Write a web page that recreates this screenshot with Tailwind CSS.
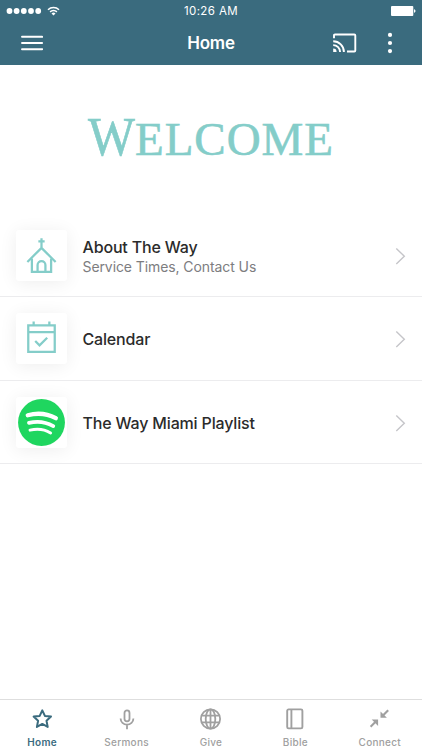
<!DOCTYPE html>
<html lang="en">
<head>
    <meta charset="UTF-8">
    <meta name="viewport" content="width=device-width, initial-scale=1.0">
    <title>Home</title>
    <script src="https://cdn.jsdelivr.net/npm/@tailwindcss/browser@4"></script>
</head>
<body class="bg-white font-['Inter',sans-serif] overflow-hidden">
    <div class="w-[422px] h-[750px] flex flex-col">
        <!-- Header -->
        <header class="h-[65px] shrink-0 bg-[#3a6b7e] text-white">
            <div class="h-[21px] grid grid-cols-3 items-center pl-[6px] pr-[6px]">
                <div class="flex items-center gap-[5px]">
                    <svg class="w-[36px] h-[8px]" viewBox="0 0 36 8" fill="currentColor">
                        <circle cx="3.5" cy="4" r="2.9"/>
                        <circle cx="10.6" cy="4" r="2.9"/>
                        <circle cx="17.8" cy="4" r="2.9"/>
                        <circle cx="25" cy="4" r="2.9"/>
                        <circle cx="32.2" cy="4" r="2.9"/>
                    </svg>
                    <svg class="w-[13px] h-[10px]" viewBox="0 0 12 10" fill="none" stroke="currentColor" stroke-width="1.5">
                        <path d="M.5 3.7a7.8 7.8 0 0 1 11 0M2.6 5.9a4.8 4.8 0 0 1 6.8 0"/>
                        <path d="M6 9.6 4 7.5a2.8 2.8 0 0 1 4 0z" fill="currentColor" stroke="none"/>
                    </svg>
                </div>
                <div class="text-center text-[11.5px] leading-none tracking-[0.4px] pt-[2px]">10:26 AM</div>
                <svg class="justify-self-end w-[25px] h-[10px]" viewBox="0 0 25 10" fill="currentColor">
                    <rect x="0" y="0" width="22.3" height="10" rx="1"/>
                    <path d="M23 3.3c2 .4 2 3 0 3.4z"/>
                </svg>
            </div>
            <div class="h-[44px] grid grid-cols-3 items-center">
                <svg class="ml-[21px] w-[22px] h-[16px]" viewBox="0 0 22 16" fill="none" stroke="currentColor" stroke-width="1.9" stroke-linecap="round">
                    <path d="M1 1.8h20.2M1 8h20.2M1 14.2h20.2"/>
                </svg>
                <h1 class="text-center text-[17px] leading-none font-semibold tracking-[-0.2px]">Home</h1>
                <div class="flex items-center justify-end gap-[30px] pr-[29px]">
                    <svg class="w-[25px] h-[20px]" viewBox="0 0 25 20" fill="none" stroke="currentColor" stroke-width="1.9">
                        <path d="M2 5.2V2.5q0-1 1-1h19.3q1 0 1 1v15q0 1-1 1H15"/>
                        <path d="M1.2 8.3A10.7 10.7 0 0 1 11.9 19M1.2 12.1A6.9 6.9 0 0 1 8.1 19"/>
                        <path d="M1.2 15.6A3.4 3.4 0 0 1 4.6 19H1.2z" fill="currentColor" stroke="none"/>
                    </svg>
                    <svg class="w-[6px] h-[22px]" viewBox="0 0 6 22" fill="currentColor">
                        <circle cx="3" cy="2.9" r="2.1"/>
                        <circle cx="3" cy="11" r="2.1"/>
                        <circle cx="3" cy="19.1" r="2.1"/>
                    </svg>
                </div>
            </div>
        </header>

        <main class="flex-1 overflow-hidden">
            <!-- Banner -->
            <div class="h-[148px]">
                <svg class="w-[422px] h-[148px] font-['Liberation_Serif',serif]" viewBox="0 0 422 148" fill="#84cdc9" stroke="#84cdc9" stroke-width="0.6">
                    <text x="88" y="90" font-size="54" textLength="47" lengthAdjust="spacingAndGlyphs">W</text>
                    <text x="135" y="90" font-size="47" textLength="198" lengthAdjust="spacing">ELCOME</text>
                </svg>
            </div>

            <!-- List -->
            <ul>
                <li class="h-[84px] flex items-center border-b border-[#ececee] pl-[15.5px] pr-[16px]">
                    <div class="size-[51px] mt-[2px] rounded-[3px] bg-white shadow-[0_2px_18px_rgba(0,0,0,0.07)]">
                        <svg class="size-[51px]" viewBox="0 0 52 52" fill="none" stroke="#84cdc9" stroke-width="2.3">
                            <path d="M26 8.5v9M22.8 11.5h6.4"/>
                            <path d="M11.6 32.6 26 18.3l14.4 14.3"/>
                            <path d="M16.2 29v13.6h19.6V29"/>
                            <path d="M22 42.6v-6.8a4 4 0 0 1 8 0v6.8"/>
                        </svg>
                    </div>
                    <div class="ml-[16px] flex-1 pt-[3px]">
                        <div class="text-[16px] leading-[20px] font-medium text-[#2b2b2b]"><span class="tracking-[-0.17px]">About The Way</span></div>
                        <div class="text-[14px] leading-[19px] text-[#7d7d7f]"><span class="tracking-[-0.09px]">Service Times, Contact Us</span></div>
                    </div>
                    <svg class="w-[11px] h-[18px] mt-[2px]" viewBox="0 0 11 18" fill="none" stroke="#c5c5c9" stroke-width="1.4"><path d="m1.3 1.5 8 7.7-8 7.7"/></svg>
                </li>
                <li class="h-[84px] flex items-center border-b border-[#ececee] pl-[15.5px] pr-[16px]">
                    <div class="size-[51px] rounded-[3px] bg-white shadow-[0_2px_18px_rgba(0,0,0,0.07)]">
                        <svg class="size-[51px]" viewBox="0 0 52 52" fill="none" stroke="#84cdc9" stroke-width="2.3">
                            <path d="M12.5 12.6h27v27h-27zM12.5 19.4h27M18 8.6v4M34 8.6v4"/>
                            <path d="m19.6 28.6 4.4 4.4 7.8-7.8"/>
                        </svg>
                    </div>
                    <div class="ml-[16px] flex-1 text-[16px] leading-[20px] font-medium text-[#2b2b2b]"><span class="tracking-[-0.17px]">Calendar</span></div>
                    <svg class="w-[11px] h-[18px]" viewBox="0 0 11 18" fill="none" stroke="#c5c5c9" stroke-width="1.4"><path d="m1.3 1.5 8 7.7-8 7.7"/></svg>
                </li>
                <li class="h-[83px] flex items-center border-b border-[#ececee] pl-[15.5px] pr-[16px] pt-[1px]">
                    <div class="size-[51px] rounded-[3px] bg-white shadow-[0_2px_18px_rgba(0,0,0,0.07)]">
                        <svg class="size-[51px]" viewBox="0 0 52 52" fill="none" stroke="white" stroke-linecap="round">
                            <circle cx="26" cy="26" r="23.9" fill="#1fd65f" stroke="none"/>
                            <path stroke-width="4.4" d="M12 18.6c9-2.4 20-1.6 28.6 3"/>
                            <path stroke-width="3.8" d="M13.2 26.4c8.5-2.2 17-1.2 24.8 3.2"/>
                            <path stroke-width="3" d="M14.3 33.8c7.5-1.8 14.5-1.1 21 2.8"/>
                        </svg>
                    </div>
                    <div class="ml-[16px] flex-1 text-[16px] leading-[20px] font-medium text-[#2b2b2b]"><span class="tracking-[-0.17px]">The Way Miami Playlist</span></div>
                    <svg class="w-[11px] h-[18px]" viewBox="0 0 11 18" fill="none" stroke="#c5c5c9" stroke-width="1.4"><path d="m1.3 1.5 8 7.7-8 7.7"/></svg>
                </li>
            </ul>
        </main>

        <!-- Tab bar -->
        <nav class="h-[51px] shrink-0 border-t border-[#dedede] grid grid-cols-5 text-[10px] leading-[12px] tracking-[0.3px] text-[#a0a0a0]">
            <a class="flex flex-col items-center pt-[8px] gap-[6px] text-[#3a6b7e] font-semibold">
                <svg class="size-[22px]" viewBox="0 0 22 22" fill="none" stroke="currentColor" stroke-width="2" stroke-linejoin="round"><path d="m11.3 2.3 2.6 5.6 6.1.7-4.5 4.2 1.2 6.1-5.4-3-5.4 3 1.2-6.1-4.5-4.2 6.1-.7z"/></svg>
                <span>Home</span>
            </a>
            <a class="flex flex-col items-center pt-[8px] gap-[6px] font-medium">
                <svg class="size-[22px]" viewBox="0 0 22 22" fill="none" stroke="currentColor" stroke-width="1.8"><rect x="8.5" y="2.4" width="5" height="10.9" rx="2.5"/><path d="M4.6 10.4a6.4 6.2 0 0 0 12.8 0M11 16.6v4.7"/></svg>
                <span>Sermons</span>
            </a>
            <a class="flex flex-col items-center pt-[8px] gap-[6px] font-medium">
                <svg class="size-[22px]" viewBox="0 0 22 22" fill="none" stroke="currentColor" stroke-width="1.8"><circle cx="10.5" cy="11" r="9.6"/><ellipse cx="10.5" cy="11" rx="4.8" ry="9.6"/><path d="M1.8 7.6h17.4M1.8 14.4h17.4M10.5 1.4v19.2"/></svg>
                <span>Give</span>
            </a>
            <a class="flex flex-col items-center pt-[8px] gap-[6px] font-medium">
                <svg class="size-[22px]" viewBox="0 0 22 22" fill="none" stroke="currentColor" stroke-width="1.9"><rect x="3.2" y="1.4" width="15.2" height="19" rx="1.4"/><path d="M7.4 1.4v19"/></svg>
                <span>Bible</span>
            </a>
            <a class="flex flex-col items-center pt-[8px] gap-[6px] font-medium">
                <svg class="size-[22px]" viewBox="0 0 22 22" fill="none" stroke="currentColor" stroke-width="2.1"><path d="m19.2 2.2-5 5M1.6 18.8l5-5"/><path d="M11.5 3.4v6.4h6.4zM9.1 18v-6.4H2.7z" fill="currentColor" stroke="none"/></svg>
                <span>Connect</span>
            </a>
        </nav>
    </div>
</body>
</html>
